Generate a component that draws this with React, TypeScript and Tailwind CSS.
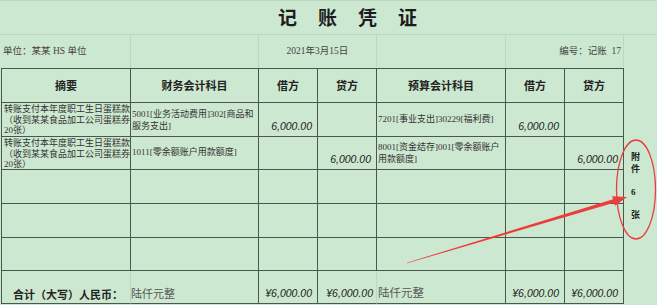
import React from "react";

const F = "font-['Liberation_Serif','Noto_Sans_CJK_SC',serif]";
const NUM = "font-['Liberation_Sans',Arial,sans-serif] italic text-[10.5px] text-[#1a1a1a]";

function Cell({ className = "", children }: { className?: string; children?: React.ReactNode }) {
  return <div className={`border-r border-b border-[#4a584b] overflow-hidden ${className}`}>{children}</div>;
}

function Amount({ v }: { v: string }) {
  return (
    <Cell className="flex items-end justify-end pr-[5px] pb-[1px]">
      <span className={NUM}>{v}</span>
    </Cell>
  );
}

function Summary() {
  return (
    <Cell className={`text-[9px] leading-[10.5px] pl-[2px] pt-[1px] text-[#333] whitespace-nowrap ${F}`}>
      转账支付本年度职工生日蛋糕款
      <br />
      （收到某某食品加工公司蛋糕券
      <br />
      20张）
    </Cell>
  );
}

export default function App() {
  return (
    <div className={`relative w-[657px] h-[305px] overflow-hidden bg-[#cde8d0] text-[#333] ${F}`}>
      {/* title row */}
      <div className="h-[35px] border-t border-b border-[#bcd8bf] flex items-center pl-[278px] gap-[21px] text-[19px] font-bold text-[#1c1c1c] font-['Noto_Sans_CJK_SC',serif]">
        <span>记</span>
        <span>账</span>
        <span>凭</span>
        <span>证</span>
      </div>

      {/* info row */}
      <div className="h-[33px] grid grid-cols-[131px_128px_118px_129px_118px_33px] text-[9.5px] text-[#444]">
        <div className="border-r border-[#bcd8bf] flex items-center pl-[3px] whitespace-nowrap">单位：某某 HS 单位</div>
        <div className="border-r border-[#bcd8bf]"></div>
        <div className="border-r border-[#bcd8bf] flex items-center justify-center whitespace-nowrap">2021年3月15日</div>
        <div className="border-r border-[#bcd8bf]"></div>
        <div className="border-r border-[#bcd8bf] flex items-center justify-end pr-[2px] whitespace-nowrap">编号：记账&nbsp;&nbsp;17</div>
        <div></div>
      </div>

      {/* table + side column */}
      <div className="flex">
        <div className="ml-[1px] border-l border-t border-[#4a584b] grid grid-cols-[129px_128px_59px_59px_129px_59px_59px] grid-rows-[34px_34px_33px_34px_34px_33px_33px]">
          {["摘要", "财务会计科目", "借方", "贷方", "预算会计科目", "借方", "贷方"].map((h, i) => (
            <Cell key={i} className="flex items-center justify-center text-[11px] font-bold text-[#222] font-['Noto_Sans_CJK_SC',serif]">
              {h}
            </Cell>
          ))}

          {/* row 1 */}
          <Summary />
          <Cell className="flex items-center pl-[1px] text-[9px] leading-[12px] whitespace-nowrap pt-[1px]">
            <div>
              5001[业务活动费用]302[商品和
              <br />
              服务支出]
            </div>
          </Cell>
          <Amount v="6,000.00" />
          <Cell />
          <Cell className="flex items-center pl-[1px] text-[9px] whitespace-nowrap">7201[事业支出]30229[福利费]</Cell>
          <Amount v="6,000.00" />
          <Cell />

          {/* row 2 */}
          <Summary />
          <Cell className="flex items-center pl-[1px] text-[9px] whitespace-nowrap">1011[零余额账户用款额度]</Cell>
          <Cell />
          <Amount v="6,000.00" />
          <Cell className="flex items-center pl-[1px] text-[9px] leading-[12px] whitespace-nowrap">
            <div>
              8001[资金结存]001[零余额账户
              <br />
              用款额度]
            </div>
          </Cell>
          <Cell />
          <Amount v="6,000.00" />

          {/* empty rows */}
          {Array.from({ length: 21 }).map((_, i) => (
            <Cell key={"e" + i} />
          ))}

          {/* total row */}
          <div className="border-b border-r border-[#bcd8bf] border-b-[#4a584b] flex items-end pl-[11px] pb-[1px] text-[11px] font-bold text-[#222] whitespace-nowrap font-['Noto_Sans_CJK_SC',serif]">
            合计（大写）人民币：
          </div>
          <Cell className="flex items-end pb-[1px] text-[11px] text-[#555] whitespace-nowrap">陆仟元整</Cell>
          <Amount v="¥6,000.00" />
          <div className="border-b border-r border-[#bcd8bf] border-b-[#4a584b] flex items-end justify-end pr-[3px] pb-[1px]">
            <span className={NUM}>¥6,000.00</span>
          </div>
          <Cell className="flex items-end pl-[1px] pb-[1px] text-[11.5px] text-[#555] whitespace-nowrap">陆仟元整</Cell>
          <Amount v="¥6,000.00" />
          <Amount v="¥6,000.00" />
        </div>

        {/* side column */}
        <div className="w-[33px] flex flex-col items-start pl-[7px] pt-[83px] text-[9px] leading-[12px] font-bold text-[#222] font-['Noto_Sans_CJK_SC',serif]">
          <span>附</span>
          <span>件</span>
          <span className="mt-[11px] font-['Liberation_Serif',serif]">6</span>
          <span className="mt-[11px]">张</span>
        </div>
      </div>

      {/* annotation overlay */}
      <svg className="absolute left-0 top-0 pointer-events-none" width="657" height="305" viewBox="0 0 657 305">
        <ellipse cx="636" cy="189.5" rx="19.5" ry="49.5" fill="none" stroke="#e8403f" strokeWidth="1.3" />
        <polygon
          points="406.9,262.7 613.1,199.3 612.2,196.2 627,197 615.0,205.8 614.1,202.7 407.1,263.3"
          fill="#ee3b3b"
        />
      </svg>
    </div>
  );
}
